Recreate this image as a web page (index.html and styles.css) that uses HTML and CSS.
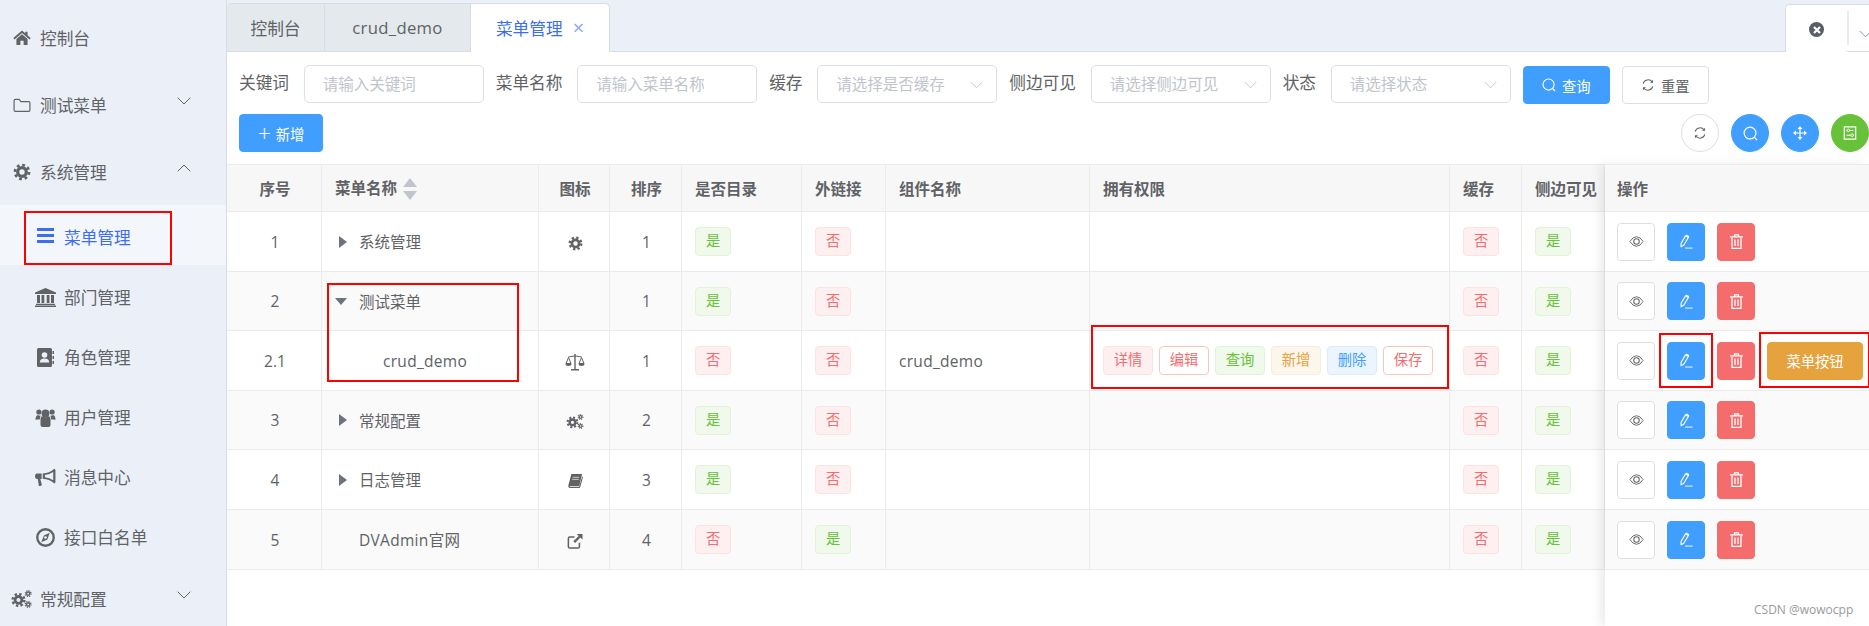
FILE: index.html
```html
<!doctype html>
<html>
    <head>
        <meta charset="utf-8" />
        <title>菜单管理</title>
        <link rel="stylesheet" href="styles.css">
    </head>
    <body>
        <!-- Shared icons -->
        <svg class="icon-defs" aria-hidden="true">
            <symbol id="i-home" viewBox="0 0 20 20">
                <path d="M1 10.800 10 3l9 7.800" fill="none" stroke="currentColor" stroke-width="2"/>
                <path d="M3.800 11 10 5.800l6.200 5.200v6.700h-4.400v-4.600H8.200v4.600H3.800zM13.600 3h2.600v4.600l-2.600-2.200z" fill="currentColor"/>
            </symbol>
            <symbol id="i-folder" viewBox="0 0 20 20">
                <path d="M1.200 5.200q0-1.400 1.400-1.400h4.200l2 2.400h8.600q1.400 0 1.400 1.400v8q0 1.400-1.400 1.400H2.600q-1.400 0-1.400-1.400z" fill="none" stroke="currentColor" stroke-width="1.300"/>
            </symbol>
            <symbol id="i-gear" viewBox="0 0 20 20">
                <circle cx="10" cy="10" r="4.800" fill="none" stroke="currentColor" stroke-width="3.600"/>
                <circle cx="10" cy="10" r="7.800" fill="none" stroke="currentColor" stroke-width="3" stroke-dasharray="3.100 3.025"/>
            </symbol>
            <symbol id="i-bars" viewBox="0 0 17 15">
                <path d="M0 0h17v3H0zM0 6h17v3H0zM0 12h17v3H0z" fill="currentColor"/>
            </symbol>
            <symbol id="i-bank" viewBox="0 0 21 19">
                <path d="M10.500 0 21 4.500V6H0V4.500zM2 7h3v8H2zM6.500 7h2.800v8H6.500zM11.700 7h2.800v8h-2.800zM16 7h3v8h-3zM1 15.800h19v1.200H1zM0 17.500h21V19H0z" fill="currentColor"/>
            </symbol>
            <symbol id="i-contact" viewBox="0 0 17 19">
                <path d="M1.500 0h12Q15 0 15 1.500v16q0 1.500-1.500 1.500h-12Q0 19 0 17.500v-16Q0 0 1.500 0z" fill="currentColor"/>
                <circle cx="7.500" cy="7" r="2.800" fill="#ebf0f8"/>
                <path d="M2.800 14.500q0-4 4.700-4t4.700 4z" fill="#ebf0f8"/>
                <path d="M15.500 3H17v3h-1.500zM15.500 8H17v3h-1.500zM15.500 13H17v3h-1.500z" fill="currentColor"/>
            </symbol>
            <symbol id="i-users" viewBox="0 0 20 19">
                <circle cx="3.400" cy="4" r="2.600" fill="currentColor"/>
                <circle cx="16.600" cy="4" r="2.600" fill="currentColor"/>
                <circle cx="10" cy="5.500" r="3.900" fill="currentColor"/>
                <path d="M0 12q0-4.500 2.500-5 1.300 1 2.800.6-1 1.300-1 3.900H1.800Q0 11.500 0 12zM20 12q0-4.500-2.500-5-1.300 1-2.800.6 1 1.300 1 3.900h2.500Q20 11.500 20 12zM5 11q.2-2.500 1.600-2.800 3.400 2.200 6.800 0Q14.800 8.500 15 11v6q0 2-2 2H7q-2 0-2-2z" fill="currentColor"/>
            </symbol>
            <symbol id="i-bullhorn" viewBox="0 0 19 16">
                <path d="M17.500 0 18.500 1v11.500l-1 1Q13 9.500 7 9.200V4.300Q13 4 17.500 0zM16.500 3Q13 5.300 9 5.800v2q4 .5 7.500 2.800z" fill="currentColor" fill-rule="evenodd"/>
                <path d="M1.500 4.300H6v5H4.800l1.400 5.200-1 1.200H3.500l-1-6.400H1.500Q0 9.300 0 6.800t1.500-2.500z" fill="currentColor"/>
            </symbol>
            <symbol id="i-compass" viewBox="0 0 18 18">
                <circle cx="9" cy="9" r="7.800" fill="none" stroke="currentColor" stroke-width="2.200"/>
                <path d="M13 4.500 10.800 11 5 13.500 7.500 7z" fill="currentColor"/>
                <circle cx="9" cy="9" r="1.300" fill="#ebf0f8"/>
            </symbol>
            <symbol id="i-cogs" viewBox="0 0 22 19">
                <circle cx="7.800" cy="10.500" r="3.600" fill="none" stroke="currentColor" stroke-width="3"/>
                <circle cx="7.800" cy="10.500" r="6.200" fill="none" stroke="currentColor" stroke-width="2.600" stroke-dasharray="2.500 2.370"/>
                <circle cx="18" cy="3.800" r="1.700" fill="none" stroke="currentColor" stroke-width="1.500"/>
                <circle cx="18" cy="3.800" r="3" fill="none" stroke="currentColor" stroke-width="1.400" stroke-dasharray="1.300 1.050"/>
                <circle cx="18" cy="15.200" r="1.700" fill="none" stroke="currentColor" stroke-width="1.500"/>
                <circle cx="18" cy="15.200" r="3" fill="none" stroke="currentColor" stroke-width="1.400" stroke-dasharray="1.300 1.050"/>
            </symbol>
            <symbol id="i-scale" viewBox="0 0 20 17">
                <path d="M9.300 0h1.400v1.500l6 1v1l-6-.9V15H14v1.500H6V15h3.300V2.600l-6 .9v-1l6-1z" fill="currentColor"/>
                <path d="M3.500 3.500 1 9.500h5zM16.500 3.500 14 9.500h5z" fill="none" stroke="currentColor" stroke-width="1"/>
                <path d="M.3 9.800h6.400Q6.400 12 3.500 12T.3 9.800zM13.300 9.800h6.400q-.3 2.200-3.200 2.200t-3.200-2.200z" fill="currentColor"/>
            </symbol>
            <symbol id="i-book" viewBox="0 0 18 17">
                <path d="M4 0h13l-.5 2-3 12.500H3Q1.600 14.500 2 15.500h11.500L17 3l1 .8-3.300 12.400Q14.500 17 13.500 17H2.500Q0 17 .2 14.300z" fill="currentColor"/>
                <path d="M5.500 4h8M5 6.500h8" stroke="#fff" stroke-width=".8"/>
            </symbol>
            <symbol id="i-link" viewBox="0 0 17 17">
                <path d="M13.500 10v4.500q0 1.500-1.500 1.500H2.500Q1 16 1 14.500V5q0-1.500 1.500-1.500H8" fill="none" stroke="currentColor" stroke-width="1.700"/>
                <path d="M10.500 0H17v6.500l-2.400-2.400-6 6.200-2-2 6.100-6z" fill="currentColor"/>
            </symbol>
            <symbol id="i-search" viewBox="0 0 16 16">
                <circle cx="7.500" cy="7.500" r="6.300" fill="none" stroke="currentColor" stroke-width="1.300"/>
                <path d="m12.300 12.300 2.700 2.700" stroke="currentColor" stroke-width="1.300"/>
            </symbol>
            <symbol id="i-refresh" viewBox="0 0 16 16">
                <path d="M2.500 6.500A5.800 5.800 0 0 1 12.800 4.500M13.500 9.500A5.800 5.800 0 0 1 3.200 11.500" fill="none" stroke="currentColor" stroke-width="1.200"/>
                <path d="M13.800 2v3.500h-3.500zM2.200 14v-3.500h3.500z" fill="currentColor"/>
            </symbol>
            <symbol id="i-move" viewBox="0 0 16 16">
                <path d="M8 1.500v13M1.500 8h13" stroke="currentColor" stroke-width="1.400"/>
                <path d="M8 0 10.800 3.400H5.200zM8 16 5.200 12.600h5.600zM0 8 3.400 5.200v5.600zM16 8 12.600 10.800V5.200z" fill="currentColor"/>
            </symbol>
            <symbol id="i-panel" viewBox="0 0 16 16">
                <path d="M1.500 1h13v14h-13z" fill="none" stroke="currentColor" stroke-width="1.400"/>
                <path d="M4 5h8M4 10.500h8" stroke="currentColor" stroke-width="1.100"/>
                <circle cx="6" cy="5" r="1.500" fill="#67c23a" stroke="currentColor"/>
                <circle cx="10.500" cy="10.500" r="1.500" fill="#67c23a" stroke="currentColor"/>
            </symbol>
            <symbol id="i-eye" viewBox="0 0 16 12">
                <path d="M.8 6Q4 .8 8 .8T15.200 6Q12 11.200 8 11.200T.8 6z" fill="none" stroke="currentColor" stroke-width="1"/>
                <circle cx="8" cy="6" r="3" fill="none" stroke="currentColor" stroke-width="1.100"/>
            </symbol>
            <symbol id="i-edit" viewBox="0 0 13 16">
                <path d="M5.500 2 8.500 3.800 3.500 12 .8 13.500.6 10.200z" fill="none" stroke="currentColor" stroke-width="1.200"/>
                <path d="M5.500 2 6.500.5 9.500 2.300 8.500 3.800z" fill="currentColor"/>
                <path d="M5 15h8" stroke="currentColor" stroke-width="1"/>
            </symbol>
            <symbol id="i-trash" viewBox="0 0 13 15">
                <path d="M0 2.800h13M4.500 2.500V.8h4v1.700" fill="none" stroke="currentColor" stroke-width="1.200"/>
                <path d="M2 3.500v10.900h9V3.500M5 5.500v6.500M8 5.500v6.500" fill="none" stroke="currentColor" stroke-width="1.300"/>
            </symbol>
            <symbol id="i-chevron" viewBox="0 0 14 8">
                <path d="M.7.7 7 7 13.300.7" fill="none" stroke="currentColor" stroke-width="1"/>
            </symbol>
        </svg>

        <div class="app">
            <!-- Left menu -->
            <nav class="sidebar">
                <a class="menu-item"><svg class="menu-icon"><use href="#i-home"/></svg>控制台</a>
                <a class="menu-item"><svg class="menu-icon"><use href="#i-folder"/></svg>测试菜单<svg class="menu-arrow"><use href="#i-chevron"/></svg></a>
                <a class="menu-item"><svg class="menu-icon"><use href="#i-gear"/></svg>系统管理<svg class="menu-arrow is-open"><use href="#i-chevron"/></svg></a>
                <a class="sub-item is-active"><svg class="sub-icon bars"><use href="#i-bars"/></svg>菜单管理</a>
                <a class="sub-item"><svg class="sub-icon"><use href="#i-bank"/></svg>部门管理</a>
                <a class="sub-item"><svg class="sub-icon"><use href="#i-contact"/></svg>角色管理</a>
                <a class="sub-item"><svg class="sub-icon"><use href="#i-users"/></svg>用户管理</a>
                <a class="sub-item"><svg class="sub-icon"><use href="#i-bullhorn"/></svg>消息中心</a>
                <a class="sub-item"><svg class="sub-icon"><use href="#i-compass"/></svg>接口白名单</a>
                <a class="menu-item"><svg class="menu-icon cogs"><use href="#i-cogs"/></svg>常规配置<svg class="menu-arrow"><use href="#i-chevron"/></svg></a>
            </nav>

            <main class="content">
                <!-- Tabs -->
                <div class="tabs">
                    <div class="tab tab-home">控制台</div>
                    <div class="tab tab-demo">crud_demo</div>
                    <div class="tab tab-menu is-active">菜单管理<span class="tab-close">×</span></div>
                    <div class="tab-tools">
                        <div class="tab-tool-close"><span class="close-dot"><svg viewBox="0 0 10 10"><path d="m2 2 6 6M8 2 2 8" stroke="#fff" stroke-width="2.200"/></svg></span></div>
                        <div class="tab-tool-more"><svg class="more-arrow"><use href="#i-chevron"/></svg></div>
                    </div>
                </div>

                <!-- Search form -->
                <form class="search-row">
                    <label class="field-label">关键词</label>
                    <div class="field">请输入关键词</div>
                    <label class="field-label">菜单名称</label>
                    <div class="field">请输入菜单名称</div>
                    <label class="field-label">缓存</label>
                    <div class="field">请选择是否缓存<svg class="field-arrow"><use href="#i-chevron"/></svg></div>
                    <label class="field-label">侧边可见</label>
                    <div class="field">请选择侧边可见<svg class="field-arrow"><use href="#i-chevron"/></svg></div>
                    <label class="field-label">状态</label>
                    <div class="field">请选择状态<svg class="field-arrow"><use href="#i-chevron"/></svg></div>
                    <button type="button" class="btn btn-primary"><svg class="btn-icon"><use href="#i-search"/></svg>查询</button>
                    <button type="button" class="btn btn-default"><svg class="btn-icon"><use href="#i-refresh"/></svg>重置</button>
                </form>

                <div class="action-row">
                    <button type="button" class="btn btn-primary btn-add"><span class="plus">+</span>新增</button>
                    <div class="round-group">
                        <button type="button" class="btn-round is-plain"><svg><use href="#i-refresh"/></svg></button>
                        <button type="button" class="btn-round is-blue"><svg class="round-search"><use href="#i-search"/></svg></button>
                        <button type="button" class="btn-round is-blue"><svg><use href="#i-move"/></svg></button>
                        <button type="button" class="btn-round is-green"><svg><use href="#i-panel"/></svg></button>
                    </div>
                </div>

                <!-- Table, the last column stays fixed on the right -->
                <div class="table-area">
                    <table class="grid grid-main">
                        <colgroup>
                            <col class="c-index"><col class="c-name"><col class="c-icon"><col class="c-sort"><col class="c-dir"><col class="c-link"><col class="c-comp"><col class="c-perm"><col class="c-cache"><col class="c-side">
                        </colgroup>
                        <thead>
                            <tr>
                                <th class="center">序号</th>
                                <th class="th-name">菜单名称<span class="sorter"><i class="sort-up"></i><i class="sort-down"></i></span></th>
                                <th class="center">图标</th>
                                <th class="center">排序</th>
                                <th>是否目录</th>
                                <th>外链接</th>
                                <th>组件名称</th>
                                <th>拥有权限</th>
                                <th>缓存</th>
                                <th>侧边可见</th>
                            </tr>
                        </thead>
                        <tbody>
                            <tr>
                                <td class="center">1</td>
                                <td class="td-name"><i class="tree-arrow"></i>系统管理</td>
                                <td class="center"><svg class="cell-icon ci-gear"><use href="#i-gear"/></svg></td>
                                <td class="center">1</td>
                                <td><span class="tag tag-green">是</span></td>
                                <td><span class="tag tag-red">否</span></td>
                                <td></td>
                                <td></td>
                                <td><span class="tag tag-red">否</span></td>
                                <td><span class="tag tag-green">是</span></td>
                            </tr>
                            <tr>
                                <td class="center">2</td>
                                <td class="td-name"><i class="tree-arrow is-open"></i>测试菜单</td>
                                <td class="center"></td>
                                <td class="center">1</td>
                                <td><span class="tag tag-green">是</span></td>
                                <td><span class="tag tag-red">否</span></td>
                                <td></td>
                                <td></td>
                                <td><span class="tag tag-red">否</span></td>
                                <td><span class="tag tag-green">是</span></td>
                            </tr>
                            <tr>
                                <td class="center">2.1</td>
                                <td class="td-name td-child latin">crud_demo</td>
                                <td class="center"><svg class="cell-icon ci-scale"><use href="#i-scale"/></svg></td>
                                <td class="center">1</td>
                                <td><span class="tag tag-red">否</span></td>
                                <td><span class="tag tag-red">否</span></td>
                                <td class="latin">crud_demo</td>
                                <td class="td-perm">
                                    <span class="tag tag-red">详情</span>
                                    <span class="tag tag-line">编辑</span>
                                    <span class="tag tag-green">查询</span>
                                    <span class="tag tag-orange">新增</span>
                                    <span class="tag tag-blue">删除</span>
                                    <span class="tag tag-line">保存</span>
                                </td>
                                <td><span class="tag tag-red">否</span></td>
                                <td><span class="tag tag-green">是</span></td>
                            </tr>
                            <tr>
                                <td class="center">3</td>
                                <td class="td-name"><i class="tree-arrow"></i>常规配置</td>
                                <td class="center"><svg class="cell-icon ci-cogs"><use href="#i-cogs"/></svg></td>
                                <td class="center">2</td>
                                <td><span class="tag tag-green">是</span></td>
                                <td><span class="tag tag-red">否</span></td>
                                <td></td>
                                <td></td>
                                <td><span class="tag tag-red">否</span></td>
                                <td><span class="tag tag-green">是</span></td>
                            </tr>
                            <tr>
                                <td class="center">4</td>
                                <td class="td-name"><i class="tree-arrow"></i>日志管理</td>
                                <td class="center"><svg class="cell-icon ci-book"><use href="#i-book"/></svg></td>
                                <td class="center">3</td>
                                <td><span class="tag tag-green">是</span></td>
                                <td><span class="tag tag-red">否</span></td>
                                <td></td>
                                <td></td>
                                <td><span class="tag tag-red">否</span></td>
                                <td><span class="tag tag-green">是</span></td>
                            </tr>
                            <tr>
                                <td class="center">5</td>
                                <td class="td-name latin">DVAdmin官网</td>
                                <td class="center"><svg class="cell-icon ci-link"><use href="#i-link"/></svg></td>
                                <td class="center">4</td>
                                <td><span class="tag tag-red">否</span></td>
                                <td><span class="tag tag-green">是</span></td>
                                <td></td>
                                <td></td>
                                <td><span class="tag tag-red">否</span></td>
                                <td><span class="tag tag-green">是</span></td>
                            </tr>
                        </tbody>
                    </table>

                    <div class="fixed-col">
                        <table class="grid">
                            <thead>
                                <tr><th>操作</th></tr>
                            </thead>
                            <tbody>
                                <tr><td class="td-ops"><div class="ops"><button type="button" class="op op-view"><svg class="eye"><use href="#i-eye"/></svg></button><button type="button" class="op op-edit"><svg><use href="#i-edit"/></svg></button><button type="button" class="op op-del"><svg><use href="#i-trash"/></svg></button></div></td></tr>
                                <tr><td class="td-ops"><div class="ops"><button type="button" class="op op-view"><svg class="eye"><use href="#i-eye"/></svg></button><button type="button" class="op op-edit"><svg><use href="#i-edit"/></svg></button><button type="button" class="op op-del"><svg><use href="#i-trash"/></svg></button></div></td></tr>
                                <tr><td class="td-ops"><div class="ops"><button type="button" class="op op-view"><svg class="eye"><use href="#i-eye"/></svg></button><button type="button" class="op op-edit"><svg><use href="#i-edit"/></svg></button><button type="button" class="op op-del"><svg><use href="#i-trash"/></svg></button><button type="button" class="op-menu">菜单按钮</button></div></td></tr>
                                <tr><td class="td-ops"><div class="ops"><button type="button" class="op op-view"><svg class="eye"><use href="#i-eye"/></svg></button><button type="button" class="op op-edit"><svg><use href="#i-edit"/></svg></button><button type="button" class="op op-del"><svg><use href="#i-trash"/></svg></button></div></td></tr>
                                <tr><td class="td-ops"><div class="ops"><button type="button" class="op op-view"><svg class="eye"><use href="#i-eye"/></svg></button><button type="button" class="op op-edit"><svg><use href="#i-edit"/></svg></button><button type="button" class="op op-del"><svg><use href="#i-trash"/></svg></button></div></td></tr>
                                <tr><td class="td-ops"><div class="ops"><button type="button" class="op op-view"><svg class="eye"><use href="#i-eye"/></svg></button><button type="button" class="op op-edit"><svg><use href="#i-edit"/></svg></button><button type="button" class="op op-del"><svg><use href="#i-trash"/></svg></button></div></td></tr>
                            </tbody>
                        </table>
                    </div>
                </div>
            </main>
        </div>

        <!-- Red marks drawn over the screenshot -->
        <div class="mark mark-menu"></div>
        <div class="mark mark-tree"></div>
        <div class="mark mark-perm"></div>
        <div class="mark mark-edit"></div>
        <div class="mark mark-btn"></div>

        <div class="watermark">CSDN @wowocpp</div>
    </body>
</html>
```

FILE: styles.css
```css
* {
    box-sizing: border-box;
}

html,
body {
    margin: 0;
    height: 626px;
    overflow: hidden;
}

body {
    position: relative;
    font-family: "Open Sans", "Noto Sans CJK SC", sans-serif;
    color: #606266;
    background: #fff;
}

svg {
    display: block;
}

.icon-defs {
    display: none;
}

.latin {
    letter-spacing: 0.3px;
}

.app {
    display: flex;
    height: 626px;
}

/* Left menu */
.sidebar {
    flex: 0 0 227px;
    padding-top: 4px;
    background: #ebf0f8;
    border-right: 1px solid #d8dce5;
    overflow: hidden;
    font-size: 16.7px;
}

.menu-item {
    display: flex;
    align-items: center;
    height: 67px;
    padding: 0 35px 0 13px;
}

.menu-icon {
    flex: none;
    width: 18px;
    height: 18px;
    margin-right: 9px;
}

.menu-icon.cogs {
    width: 21px;
    height: 18px;
    margin-left: -2px;
    margin-right: 8px;
}

.menu-arrow {
    width: 14px;
    height: 8px;
    margin-left: auto;
    margin-bottom: 8px;
}

.menu-arrow.is-open {
    transform: rotate(180deg);
}

.sub-item {
    display: flex;
    align-items: center;
    height: 60px;
    padding-top: 4px;
    padding-left: 35px;
}

.sub-item.is-active {
    color: #3d6df2;
    background: #f3f7fb;
}

.sub-icon {
    flex: none;
    width: 21px;
    height: 19px;
    margin-right: 8px;
}

.sub-icon.bars {
    height: 15px;
    margin-bottom: 4px;
}

/* Main area */
.content {
    flex: 1;
    min-width: 0;
    display: flex;
    flex-direction: column;
}

.tabs {
    display: flex;
    flex: none;
    height: 52px;
    padding-top: 3px;
    background: #ebf0f8;
    border-bottom: 1px solid #d8dce5;
    font-size: 16.7px;
}

.tab {
    display: flex;
    align-items: center;
    justify-content: center;
    height: 48px;
    background: #e4e9ee;
    border: 1px solid #d8dce5;
    border-left: 0;
    border-bottom: 0;
}

.tab-home {
    width: 98px;
    border-top-left-radius: 5px;
}

.tab-demo {
    width: 146px;
    letter-spacing: 0.3px;
}

.tab-menu {
    width: 139px;
    border-top-right-radius: 5px;
}

.tab.is-active {
    height: 49px;
    color: #3d6df2;
    background: #fff;
}

.tab-close {
    margin-left: 10px;
    font-size: 20px;
    line-height: 1;
    color: #8aa8f5;
}

.tab-tools {
    display: flex;
    margin-left: auto;
    padding-top: 1px;
}

.tab-tool-close {
    display: flex;
    justify-content: center;
    padding-top: 17px;
    width: 62px;
    height: 48px;
    background: #fff;
    border: 1px solid #d8dce5;
    border-right: 0;
    border-bottom: 0;
    border-top-left-radius: 5px;
}

.close-dot {
    width: 15px;
    height: 15px;
    padding: 2.500px;
    border-radius: 50%;
    background: #5a5e66;
}

.tab-tool-more {
    position: relative;
    width: 22px;
    height: 47px;
    padding: 25px 0 0 12px;
    background: #fff;
    border-top: 1px solid #d8dce5;
}

.tab-tool-more::before {
    content: "";
    position: absolute;
    left: 0;
    top: 6px;
    height: 34px;
    border-left: 2px solid #e8ebf0;
}

.more-arrow {
    width: 13px;
    height: 8px;
    color: #7d8da8;
}

/* Search form */
.search-row {
    display: flex;
    align-items: flex-start;
    padding: 13px 0 0 12px;
}

.field-label {
    height: 38px;
    line-height: 36px;
    padding-right: 14.7px;
    font-size: 16.7px;
}

.field {
    position: relative;
    flex: none;
    width: 180px;
    height: 38px;
    margin-right: 12px;
    padding-left: 18px;
    line-height: 36px;
    font-size: 15.500px;
    color: #c0c4cc;
    background: #fff;
    border: 1px solid #dcdfe6;
    border-radius: 5px;
}

.field-arrow {
    position: absolute;
    right: 13px;
    top: 15px;
    width: 13px;
    height: 8px;
}

.btn {
    display: flex;
    align-items: center;
    justify-content: center;
    width: 87px;
    height: 38px;
    margin-top: 1px;
    padding: 0;
    font: inherit;
    font-size: 14.300px;
    border-radius: 4px;
    border: 1px solid #dcdfe6;
}

.btn-primary {
    color: #fff;
    background: #409eff;
    border-color: #409eff;
}

.btn-default {
    color: #606266;
    background: #fff;
    margin-left: 12px;
}

.btn-icon {
    width: 14px;
    height: 14px;
    margin-right: 6px;
}

.action-row {
    display: flex;
    justify-content: space-between;
    padding: 10px 0 12px 12px;
}

.btn-add {
    width: 84px;
    margin-top: 0;
}

.plus {
    margin-right: 5px;
    font-size: 23px;
    font-weight: 300;
    line-height: 1;
}

.round-group {
    display: flex;
    gap: 12px;
}

.btn-round {
    display: flex;
    align-items: center;
    justify-content: center;
    width: 38px;
    height: 38px;
    padding: 0;
    border-radius: 50%;
    border: 1px solid #dcdfe6;
}

.btn-round svg {
    width: 14px;
    height: 14px;
}

.btn-round svg.round-search {
    width: 15px;
    height: 15px;
}

.btn-round.is-plain {
    color: #606266;
    background: #fff;
}

.btn-round.is-blue {
    color: #fff;
    background: #409eff;
    border-color: #409eff;
}

.btn-round.is-green {
    color: #fff;
    background: #67c23a;
    border-color: #67c23a;
}

/* Table */
.table-area {
    flex: 1;
    display: flex;
    align-items: stretch;
    min-height: 0;
}

.grid {
    width: 100%;
    table-layout: fixed;
    border-collapse: separate;
    border-spacing: 0;
    border-top: 1px solid #ebebeb;
    font-size: 15.500px;
}

.grid-main {
    flex: none;
    width: 1378px;
    height: 0;
}

.c-index { width: 95px; }
.c-name { width: 217px; }
.c-icon { width: 71px; }
.c-sort { width: 72px; }
.c-dir { width: 120px; }
.c-link { width: 84px; }
.c-comp { width: 204px; }
.c-perm { width: 360px; }
.c-cache { width: 72px; }
.c-side { width: 83px; }

.grid th,
.grid td {
    padding: 0 0 0 13px;
    border-bottom: 1px solid #ebebeb;
    text-align: left;
    white-space: nowrap;
}

.grid-main th,
.grid-main td {
    border-right: 1px solid #ebebeb;
}

.grid th {
    height: 47px;
    font-weight: 700;
    background: #f7f7f8;
}

.grid td {
    height: 60px;
    background: #fff;
}

.grid tbody tr:nth-child(2) td,
.grid tbody tr:nth-child(4) td {
    height: 59px;
}

.grid tbody tr:nth-child(even) td {
    background: #fafafa;
}

.grid th.center,
.grid td.center {
    padding: 0 0 0 2px;
    text-align: center;
}

.cell-icon {
    display: inline-block;
    vertical-align: middle;
}

.ci-gear {
    width: 15px;
    height: 15px;
}

.ci-scale {
    width: 20px;
    height: 17px;
}

.ci-cogs {
    width: 18px;
    height: 15px;
}

.ci-book {
    width: 15px;
    height: 14px;
}

.ci-link {
    width: 16px;
    height: 15px;
}

.sorter {
    display: inline-block;
    position: relative;
    width: 14px;
    height: 22px;
    margin-left: 6px;
    vertical-align: middle;
}

.sort-up,
.sort-down {
    position: absolute;
    left: 0;
    border-left: 7px solid transparent;
    border-right: 7px solid transparent;
}

.sort-up {
    top: 0;
    border-bottom: 9px solid #c0c4cc;
}

.sort-down {
    bottom: 0;
    border-top: 9px solid #c0c4cc;
}

.td-name {
    position: relative;
}

.grid td.td-name {
    padding-left: 37px;
}

.grid td.td-child {
    padding-left: 61px;
}

.tree-arrow {
    position: absolute;
    left: 17px;
    top: 50%;
    margin-top: -6px;
    border-top: 6px solid transparent;
    border-bottom: 6px solid transparent;
    border-left: 8px solid #6b7280;
}

.tree-arrow.is-open {
    left: 13px;
    margin-top: -3px;
    border-left: 6.500px solid transparent;
    border-right: 6.500px solid transparent;
    border-top: 7.500px solid #6b7280;
    border-bottom: 0;
}

.tag {
    display: inline-block;
    height: 29px;
    padding: 0 10px;
    line-height: 26px;
    font-size: 14.300px;
    vertical-align: middle;
    border: 1px solid;
    border-radius: 4px;
}

.tag-green {
    color: #67c23a;
    background: #f0f9eb;
    border-color: #e1f3d8;
}

.tag-red {
    color: #f56c6c;
    background: #fef0f0;
    border-color: #fde2e2;
}

.tag-orange {
    color: #e6a23c;
    background: #fdf6ec;
    border-color: #faecd8;
}

.tag-blue {
    color: #409eff;
    background: #ecf5ff;
    border-color: #d9ecff;
}

.tag-line {
    color: #f56c6c;
    background: #fff;
    border-color: #fbc4c4;
}

.td-perm {
    font-size: 0;
}

.td-perm .tag {
    width: 50px;
    padding: 0;
    text-align: center;
    margin-right: 6px;
}

/* Fixed column */
.fixed-col {
    flex: 1;
    position: relative;
    background: #fff;
    box-shadow: -5px 0 10px rgba(0, 0, 0, 0.08);
}

.grid td.td-ops {
    padding-left: 12px;
}

.fixed-col th {
    padding-left: 12px;
}

.ops {
    display: flex;
    gap: 12px;
}

.op {
    display: flex;
    align-items: center;
    justify-content: center;
    width: 38px;
    height: 38px;
    padding: 0;
    border: 1px solid #dcdfe6;
    border-radius: 4px;
}

.op svg {
    width: 15px;
    height: 15px;
}

.op svg.eye {
    height: 11px;
}

.op-view {
    color: #606266;
    background: #fff;
}

.op-edit {
    color: #fff;
    background: #409eff;
    border-color: #409eff;
}

.op-del {
    color: #fff;
    background: #f56c6c;
    border-color: #f56c6c;
}

.op-menu {
    width: 96px;
    height: 38px;
    padding: 0;
    font: inherit;
    font-size: 14.300px;
    color: #fff;
    background: #e6a23c;
    border: 1px solid #e6a23c;
    border-radius: 4px;
}

/* Red marks */
.mark {
    position: absolute;
    border: 2px solid #f00;
}

.mark-menu {
    left: 24px;
    top: 211px;
    width: 148px;
    height: 54px;
}

.mark-tree {
    left: 327px;
    top: 283px;
    width: 192px;
    height: 99px;
}

.mark-perm {
    left: 1091px;
    top: 325px;
    width: 358px;
    height: 64px;
}

.mark-edit {
    left: 1659px;
    top: 333px;
    width: 54px;
    height: 55px;
}

.mark-btn {
    left: 1759px;
    top: 332px;
    width: 110px;
    height: 56px;
    border-right-width: 1px;
}

.watermark {
    position: absolute;
    left: 1754px;
    top: 601px;
    font-size: 12px;
    line-height: 18px;
    color: #9a9a9a;
}
```
